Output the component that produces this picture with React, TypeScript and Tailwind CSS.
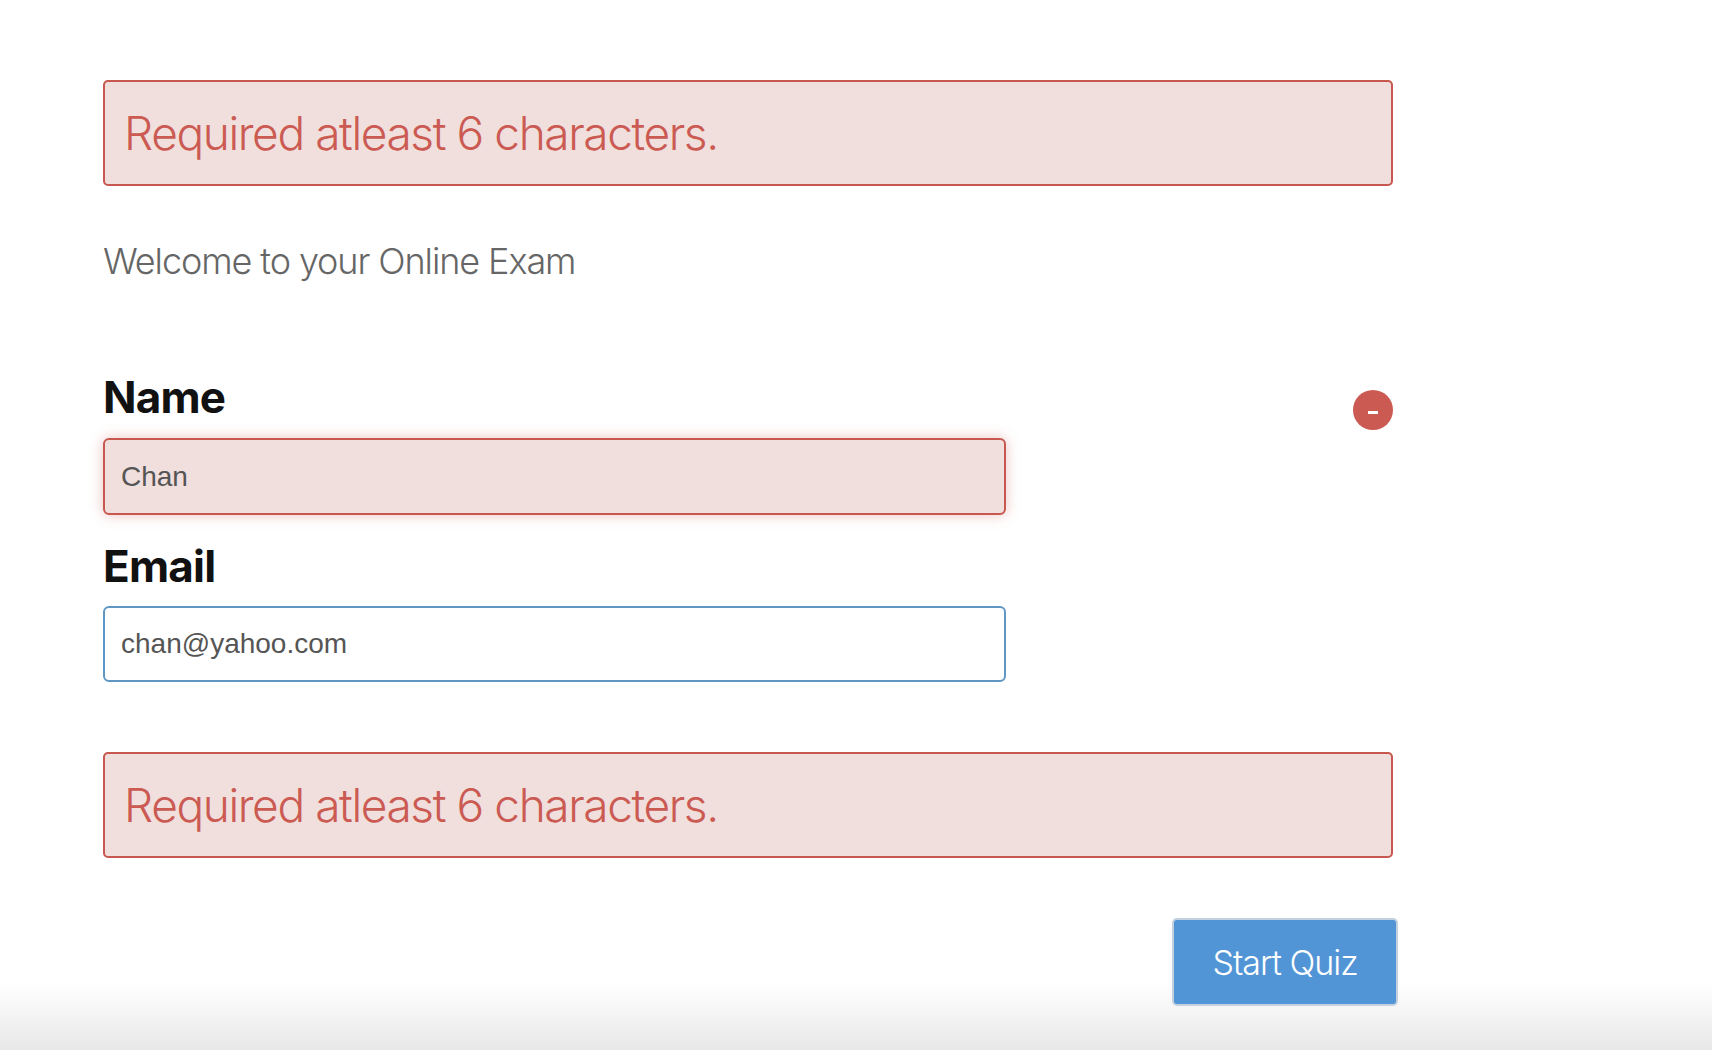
export default function App() {
  const ui = "font-['Inter','Noto_Sans',sans-serif]";
  const Alert = () => (
    <div className="flex h-[106px] items-center rounded-[5px] border-2 border-[#c8574f] bg-[#f0dfdd] pl-[19px]">
      <span className="text-[46px] font-light leading-none tracking-[-1.4px] text-[#cb5a52]">Required atleast 6 characters.</span>
    </div>
  );
  return (
    <div className={`relative h-[1050px] w-[1712px] overflow-hidden bg-white ${ui}`}>
      <div className="pointer-events-none absolute inset-x-0 bottom-0 h-[68px] bg-gradient-to-b from-transparent to-[#e8e8e8]" />
      <div className="relative ml-[103px] w-[1290px] pt-20">
        <Alert />
        <p className="mt-[52px] text-[36px] font-light leading-[46px] tracking-[-1.1px] text-[#666666]">Welcome to your Online Exam</p>
        <div className="mt-[91px] flex">
          <div className="w-[903px]">
            <label className="block text-[44px] font-bold leading-[44px] tracking-[-0.8px] text-[#111111]">Name</label>
            <div className="mt-[19px] flex h-[77px] items-center rounded-[6px] border-2 border-[#c8574f] bg-[#f0dfdd] pl-4 font-['Liberation_Sans',sans-serif] text-[28px] text-[#555555] shadow-[0_0_14px_rgba(200,87,79,0.35)]">Chan</div>
            <label className="mt-[29px] block text-[44px] font-bold leading-[44px] tracking-[-0.8px] text-[#111111]">Email</label>
            <div className="mt-[18px] flex h-[76px] items-center rounded-[6px] border-2 border-[#5f97c4] bg-white pl-4 font-['Liberation_Sans',sans-serif] text-[28px] text-[#555555]">chan@yahoo.com</div>
          </div>
          <div className="ml-auto mt-[15px] flex h-10 w-10 items-center justify-center rounded-full bg-[#cb5a52]">
            <span className="mt-[4px] h-[3px] w-[10px] bg-white" />
          </div>
        </div>
        <div className="mt-[70px]">
          <Alert />
        </div>
        <div className="-mr-[5px] mt-[60px] flex justify-end">
          <button className="h-[88px] w-[226px] rounded-[5px] border-2 border-[#c3d0de] bg-[#5295d6] text-[34px] font-light tracking-[-1px] text-white">Start Quiz</button>
        </div>
      </div>
    </div>
  );
}
